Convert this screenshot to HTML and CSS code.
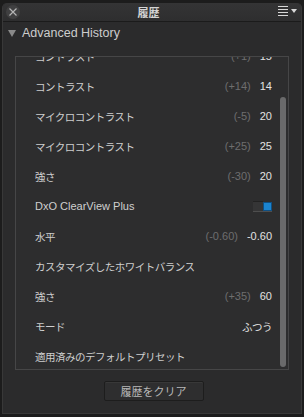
FILE: index.html
```html
<!DOCTYPE html>
<html lang="ja">
<head>
<meta charset="utf-8">
<link rel="stylesheet" href="styles.css">
</head>
<body>
<div class="window">
  <div class="titlebar">
    <span class="close">
      <svg width="10" height="10" viewBox="0 0 10 10"><path d="M1.5 1.5 L8.5 8.5 M8.5 1.5 L1.5 8.5" stroke="#b5b5b5" stroke-width="1.2" fill="none"/></svg>
    </span>
    <span class="title">履歴</span>
    <span class="menu">
      <svg width="20" height="12" viewBox="0 0 20 12">
        <rect x="0" y="0" width="10" height="1" fill="#d8d8d8"/>
        <rect x="0" y="3" width="10" height="1" fill="#d8d8d8"/>
        <rect x="0" y="6" width="10" height="1" fill="#d8d8d8"/>
        <rect x="0" y="9" width="10" height="1" fill="#d8d8d8"/>
        <path d="M13 3 L19 3 L16 7 Z" fill="#d8d8d8"/>
      </svg>
    </span>
  </div>
  <div class="section-header">
    <span class="tri"></span>
    <span class="section-title">Advanced History</span>
  </div>
  <div class="listbox">
    <div class="rows">
      <div class="row"><span class="label jp">コントラスト</span><span class="delta">(+1)</span><span class="value">15</span></div>
      <div class="row"><span class="label jp">コントラスト</span><span class="delta">(+14)</span><span class="value">14</span></div>
      <div class="row"><span class="label jp">マイクロコントラスト</span><span class="delta">(-5)</span><span class="value">20</span></div>
      <div class="row"><span class="label jp">マイクロコントラスト</span><span class="delta">(+25)</span><span class="value">25</span></div>
      <div class="row"><span class="label jp">強さ</span><span class="delta">(-30)</span><span class="value">20</span></div>
      <div class="row"><span class="label">DxO ClearView Plus</span><span class="toggle"><span class="toggle-off"></span><span class="toggle-on"></span></span></div>
      <div class="row"><span class="label jp">水平</span><span class="delta">(-0.60)</span><span class="value">-0.60</span></div>
      <div class="row"><span class="label jp">カスタマイズしたホワイトバランス</span></div>
      <div class="row"><span class="label jp">強さ</span><span class="delta">(+35)</span><span class="value">60</span></div>
      <div class="row"><span class="label jp">モード</span><span class="value jp">ふつう</span></div>
      <div class="row"><span class="label jp">適用済みのデフォルトプリセット</span></div>
    </div>
    <div class="thumb"></div>
  </div>
  <div class="actions">
    <button class="clear">履歴をクリア</button>
  </div>
</div>
</body>
</html>
```
FILE: styles.css
```css
html, body {
  margin: 0;
  padding: 0;
}
body {
  background: #1c1c1c;
  width: 304px;
  height: 417px;
  overflow: hidden;
  font-family: "Liberation Sans", "Noto Sans CJK JP", sans-serif;
}
.window {
  margin: 3px 2px 0 2px;
  height: 411px;
  background: #2b2b2c;
  border-radius: 5px 5px 0 0;
  border-left: 1px solid #383838;
  border-right: 1px solid #383838;
  border-bottom: 1px solid #383838;
  box-sizing: border-box;
  display: flex;
  flex-direction: column;
}
.titlebar {
  height: 19px;
  box-sizing: border-box;
  border-bottom: 1px solid #1b1b1b;
  background: linear-gradient(#343435, #2e2e2f);
  border-radius: 5px 5px 0 0;
  display: flex;
  align-items: center;
  position: relative;
}
.close {
  width: 14px;
  height: 14px;
  border-radius: 50%;
  background: #404041;
  margin-left: 3px;
  display: flex;
  align-items: center;
  justify-content: center;
}
.title {
  flex: 1;
  text-align: center;
  color: #d4d4d4;
  font-size: 11px;
  font-weight: bold;
  margin-left: -1px;
}
.menu {
  width: 20px;
  height: 12px;
  margin-right: 3px;
  display: flex;
}
.section-header {
  height: 34px;
  box-sizing: border-box;
  padding: 4px 0 0 5px;
  display: flex;
  align-items: flex-start;
}
.tri {
  width: 0;
  height: 0;
  border-left: 4px solid transparent;
  border-right: 4px solid transparent;
  border-top: 7px solid #8a8a8a;
  margin-top: 4px;
}
.section-title {
  margin-left: 6px;
  color: #cdcdcd;
  font-size: 12.5px;
  line-height: 15px;
}
.listbox {
  margin-left: 12px;
  width: 274px;
  height: 314px;
  box-sizing: border-box;
  border: 1px solid #464647;
  background: #2d2d2e;
  overflow: hidden;
  position: relative;
}
.rows {
  margin-top: -16px;
}
.row {
  height: 30px;
  display: flex;
  align-items: center;
  padding: 0 16px 0 19px;
  font-size: 11px;
  color: #cfcfcf;
}
.label {
  flex: 1;
  white-space: nowrap;
}
.jp {
  font-size: 10.5px;
  letter-spacing: -0.5px;
}
.delta {
  color: #6e6e6e;
  margin-right: 9px;
}
.value {
  color: #e2e2e2;
}
.toggle {
  display: flex;
  height: 10px;
  border-bottom: 1px solid #4e4e4e;
  margin-top: 1px;
}
.toggle-off {
  width: 10px;
  height: 9px;
  background: #353536;
  border-top: 1px solid #222;
}
.toggle-on {
  width: 9px;
  height: 9px;
  background: #1b84cf;
  border: 1px solid #0f4f82;
  box-sizing: border-box;
  margin-top: 1px;
}
.thumb {
  position: absolute;
  left: 264px;
  top: 40px;
  width: 6px;
  height: 270px;
  border-radius: 3px;
  background: #6a6a6b;
}
.actions {
  display: flex;
  justify-content: center;
  margin-top: 11px;
}
.clear {
  width: 100px;
  height: 20px;
  margin-left: 3px;
  background: #2e2e2f;
  border: 1px solid #1d1d1d;
  border-radius: 2px;
  color: #b8b8b8;
  font-family: "Noto Sans CJK JP", sans-serif;
  font-size: 11px;
  padding: 0;
  box-shadow: inset 0 1px 0 #383838;
}
```
